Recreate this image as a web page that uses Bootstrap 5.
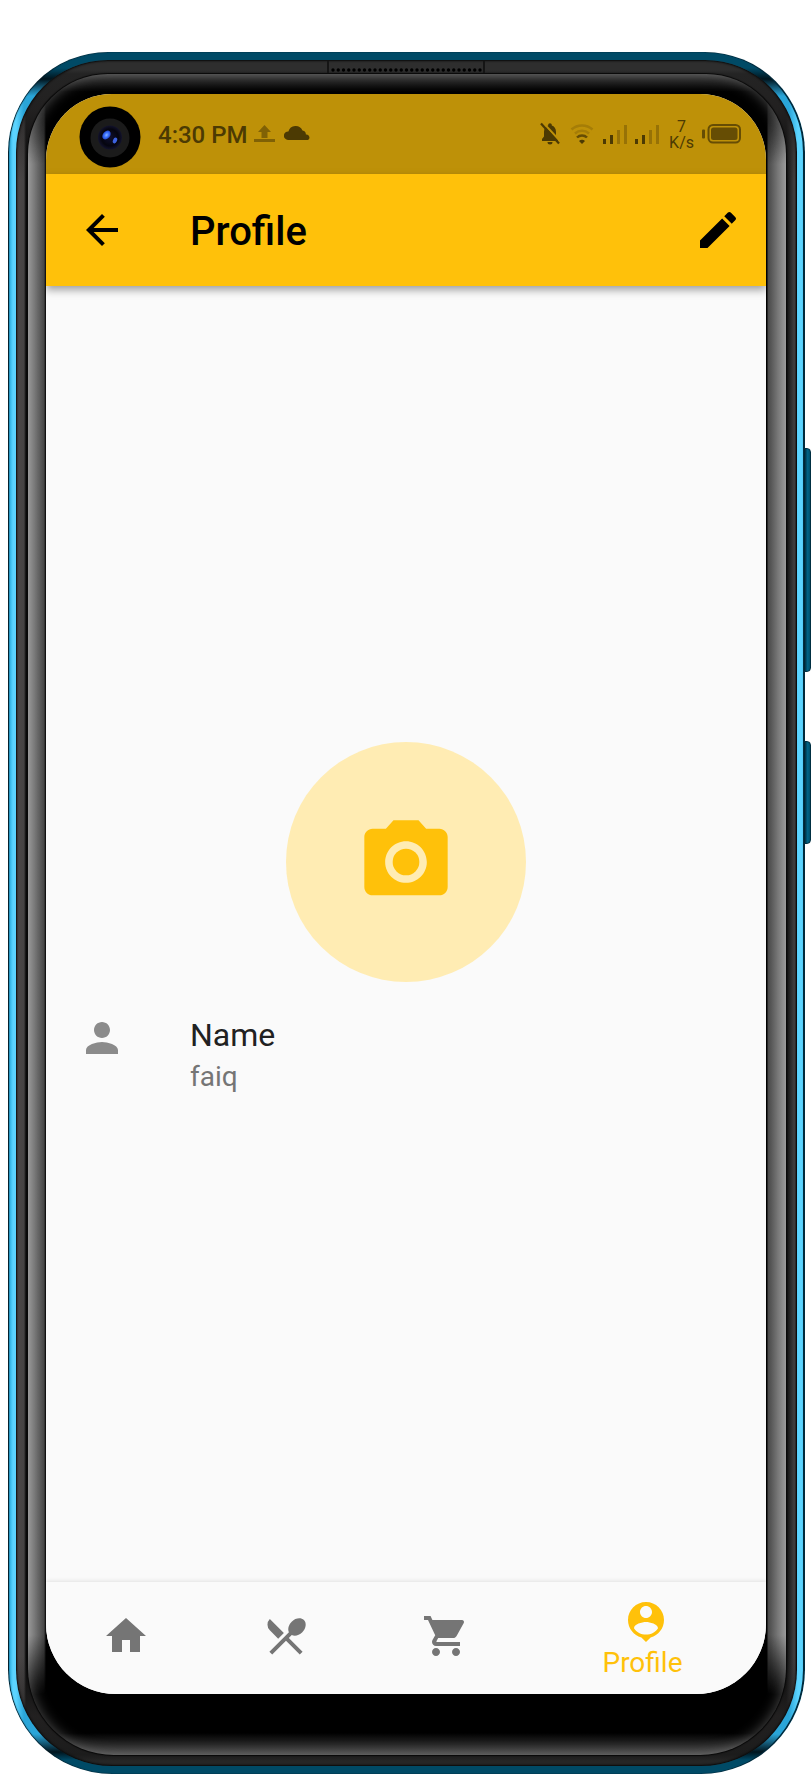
<!DOCTYPE html>
<html lang="en">
<head>
<meta charset="utf-8">
<meta name="viewport" content="width=device-width, initial-scale=1">
<title>Profile</title>
<link href="https://cdn.jsdelivr.net/npm/bootstrap@5.3.0/dist/css/bootstrap.min.css" rel="stylesheet">
<style>
  :root { --amber: #ffc10a; --ink: #4c3a03; --paper: #fafafa; }
  body { font-family: Roboto, "Liberation Sans", sans-serif; background: #fff; padding: 52px 7px 14px 8px; }
  svg { display: block; flex: none; }

  /* Phone body, from the metal rim inwards */
  .rim {
    padding: 8px;
    border-radius: 100px 100px 104px 104px;
    background:
      linear-gradient(to bottom, #004a66 0, #004a66 16px, #00141d 27px, transparent 44px,
        transparent calc(100% - 40px), #00141d calc(100% - 22px), #004a66 calc(100% - 14px), #004a66 100%),
      linear-gradient(to right, #1f90bd 0, #3fc0f0 3px, #5cd4ff 5px, #5cd4ff 8px, #2aa5d8 16px, #2aa5d8 30px, #123 50%,
        #2aa5d8 calc(100% - 30px), #2aa5d8 calc(100% - 16px), #5cd4ff calc(100% - 7px), #5cd4ff calc(100% - 3px), #2fa8d8 100%);
    box-shadow: inset 1px 0 1px #001822, inset -2px 0 0 #002a3c, inset 0 0 1px #001822;
  }
  .gasket {
    padding: 14px 11px 11px 12px;
    border-radius: 92px 92px 96px 96px;
    background:
      linear-gradient(to bottom, #2e2e2e 0, #2e2e2e 10px, #242424 14px, rgba(40,38,38,.8) 50px, transparent 120px,
        transparent calc(100% - 110px), rgba(40,38,38,.8) calc(100% - 50px), #1c1c1c calc(100% - 11px), #262626 calc(100% - 5px), #262626 100%),
      linear-gradient(to right, #4d4848 0, #454343 8px, #0a0a0a 10px, #0a0a0a 12px,
        #0a0a0a calc(100% - 11px), #202020 calc(100% - 8px), #464343 calc(100% - 2px), #111 100%);
    box-shadow: inset 0 0 2px 1px #080808;
  }
  .glass {
    padding: 20px 20px 61px 18px;
    border-radius: 80px 80px 86px 86px;
    background:
      linear-gradient(to bottom, #3a3a3a 0, #222 6px, #000 18px, rgba(0,0,0,.8) 30px, transparent 90px,
        transparent calc(100% - 120px), #000 calc(100% - 60px), #000 calc(100% - 22px), #4a4a4a 100%),
      linear-gradient(to right, #969696 0, #484848 16px, #000 18px, #000 calc(100% - 19px), #4a4a4a calc(100% - 18px), #999 100%);
    box-shadow: 0 0 1px 1px #080808, inset 0 0 14px rgba(160,160,160,.5);
  }
  .display-area { border-radius: 66px 66px 70px 70px; background: var(--paper); }

  .earpiece { top: 9px; left: 50%; margin-left: -80px; }
  .side-key { left: calc(100% - 2px); width: 8px; border-radius: 0 4px 4px 0; border: 1px solid #002f42; background: linear-gradient(to right, #001c28, #006488 60%, #00506c); }
  .key-volume { top: 23%; height: 13%; }
  .key-power { top: 40%; height: 6%; }

  .status-bar { height: 80px; padding: 0 25px 0 112px; background: #be9108; color: var(--ink); }
  .clock { font-size: 24px; line-height: 28px; font-weight: 500; padding-top: 2px; }
  .net-speed { font-size: 16px; line-height: 16px; padding: 2px 0 0 2px; }
  .lens { top: 12px; left: 33px; }

  .app-bar { height: 112px; padding: 0 24px 0 32px; background: var(--amber); color: #000; box-shadow: 0 4px 8px rgba(0,0,0,.36); }
  .app-title { font-size: 40px; line-height: 48px; font-weight: 500; margin-left: 64px; padding-top: 3px; }
  .icon-btn { padding: 0; border: 0; background: none; color: inherit; }

  .avatar { width: 240px; height: 240px; border: 0; background: #ffecb3; color: var(--amber); }
  .info-row { height: 144px; padding: 32px; gap: 64px; color: #8b8b8b; }
  .info-label { font-size: 32px; line-height: 42px; font-weight: 400; color: #212121; margin-bottom: 5px; }
  .info-value { font-size: 28px; line-height: 32px; color: #757575; }

  .tab-bar { height: 112px; background: var(--paper); box-shadow: 0 -1px 4px rgba(0,0,0,.1); }
  .tab { flex: 2 1 0; padding-bottom: 4px; color: #757575; text-decoration: none; }
  .tab.selected { flex-grow: 3; padding: 2px 0 0; color: var(--amber); font-size: 28px; line-height: 34px; }
  .tab-label { padding-right: 7px; }
</style>
</head>
<body class="d-flex flex-column min-vh-100">
<div class="rim position-relative flex-grow-1 d-flex flex-column">
  <div class="side-key key-volume position-absolute"></div>
  <div class="side-key key-power position-absolute"></div>
  <div class="gasket flex-grow-1 d-flex flex-column">
    <svg class="earpiece position-absolute" width="158" height="13" viewBox="0 0 158 13" aria-hidden="true">
      <path d="M1 0V12M157 0V12" stroke="#151515" stroke-width="2"/>
      <path d="M6 9H154" stroke="#000" stroke-width="3.4" stroke-linecap="round" stroke-dasharray="0 5.25"/>
    </svg>
    <div class="glass flex-grow-1 d-flex flex-column">
      <div class="display-area position-relative overflow-hidden flex-grow-1 d-flex flex-column">

        <div class="status-bar d-flex align-items-center">
          <svg class="lens position-absolute" width="62" height="62" viewBox="0 0 62 62" aria-hidden="true">
            <defs>
              <radialGradient id="lensGlow"><stop offset="0" stop-color="#101030"/><stop offset=".7" stop-color="#05050f"/><stop offset="1" stop-color="#12122c"/></radialGradient>
              <radialGradient id="lensBlue"><stop offset="0" stop-color="#8ab4ff"/><stop offset=".5" stop-color="#3d74ff"/><stop offset="1" stop-color="#2346c8"/></radialGradient>
            </defs>
            <circle cx="31" cy="31" r="30.5" fill="#000"/>
            <circle cx="31" cy="32" r="19.5" fill="#1b1b1b"/>
            <circle cx="31" cy="31.500" r="12" fill="url(#lensGlow)"/>
            <ellipse cx="27.500" cy="29" rx="3.600" ry="5" transform="rotate(40 27.500 29)" fill="url(#lensBlue)"/>
            <ellipse cx="36" cy="34.500" rx="2" ry="3" transform="rotate(25 36 34.500)" fill="#3d62e0"/>
          </svg>
          <span class="clock">4:30 PM</span>
          <svg class="ms-1" width="24" height="20" viewBox="0 0 24 20" fill="#806105" aria-hidden="true"><path d="M12.500 1l6.500 7h-3.500v6h-6V8H6zM2 15h21v3H2z"/></svg>
          <svg class="ms-2" width="26" height="20" viewBox="0 0 26 20" fill="currentColor" aria-hidden="true"><path d="M4 16a4.300 4.300 0 0 1 .4-8.600A7.500 7.500 0 0 1 18.500 6.500a4 4 0 0 1 3.400 4A3 3 0 0 1 24 16z"/></svg>

          <div class="ms-auto d-flex align-items-center">
            <svg width="22" height="24" viewBox="0 0 22 24" aria-hidden="true">
              <path fill="currentColor" d="M3 19v-2l2-2.500V10c0-3.600 1.700-5.800 4.200-6.500V3c0-1 .8-1.800 1.800-1.800s1.800.8 1.800 1.800v.5C15.300 4.200 17 6.400 17 10v4.500l2 2.500v2zM8.500 20h5a2.500 2.500 0 0 1-5 0z"/>
              <path d="M4 .5L21 19" stroke="#be9108" stroke-width="2"/><path d="M2 1.500L20 21.500" stroke="currentColor" stroke-width="2.200"/>
            </svg>
            <svg class="ms-2" width="26" height="24" viewBox="0 0 26 24" fill="none" stroke-width="2.500" aria-hidden="true">
              <path d="M2.500 7.500a16 16 0 0 1 21 0" stroke="#a57d07"/><path d="M6 11.500a10.500 10.500 0 0 1 14 0" stroke="#a57d07"/>
              <path d="M8 15.500a7 7 0 0 1 10 0" stroke="#664d04"/><path d="M13 22l-3-3a4.200 4.200 0 0 1 6 0z" fill="#4c3a03"/>
            </svg>
            <svg class="ms-2" width="24" height="24" viewBox="0 0 24 24" aria-hidden="true">
              <path fill="#4c3a03" d="M0 17h3v5H0zM7 13h3v9H7z"/><path fill="#977206" d="M14 8h3v14h-3zM21 3h3v19h-3z"/>
            </svg>
            <svg class="ms-2" width="24" height="24" viewBox="0 0 24 24" aria-hidden="true">
              <path fill="#4c3a03" d="M0 17h3v5H0zM7 13h3v9H7z"/><path fill="#977206" d="M14 8h3v14h-3zM21 3h3v19h-3z"/>
            </svg>
            <div class="net-speed text-center ms-2">7<br>K/s</div>
            <svg class="ms-2" width="39" height="20" viewBox="0 0 39 20" aria-hidden="true">
              <rect x="0" y="5.500" width="3" height="9" rx="1" fill="#664d04"/>
              <rect x="6.500" y="1" width="31.500" height="17.500" rx="4.500" fill="none" stroke="#664d04" stroke-width="2"/>
              <rect x="9" y="3.500" width="26.500" height="12.500" rx="2.500" fill="#664d04"/>
            </svg>
          </div>
        </div>

        <header class="app-bar d-flex align-items-center">
          <button type="button" class="icon-btn" aria-label="Back">
            <svg width="48" height="48" viewBox="0 0 24 24" fill="currentColor"><path d="M20 11H7.830l5.590-5.590L12 4l-8 8 8 8 1.410-1.410L7.830 13H20v-2z"/></svg>
          </button>
          <h1 class="app-title mb-0 me-auto">Profile</h1>
          <button type="button" class="icon-btn" aria-label="Edit">
            <svg width="48" height="48" viewBox="0 0 24 24" fill="currentColor"><path d="M3 17.250V21h3.750L17.810 9.940l-3.750-3.750L3 17.250zM20.710 7.040a1 1 0 0 0 0-1.410l-2.340-2.340a1 1 0 0 0-1.410 0l-1.830 1.830 3.750 3.750 1.830-1.830z"/></svg>
          </button>
        </header>

        <main class="flex-grow-1 d-flex flex-column justify-content-center">
          <button type="button" class="avatar rounded-circle align-self-center d-flex align-items-center justify-content-center" aria-label="Change photo">
            <svg width="100" height="100" viewBox="0 0 24 24" fill="currentColor"><circle cx="12" cy="12" r="3.200"/><path d="M9 2L7.170 4H4c-1.100 0-2 .9-2 2v12c0 1.100.9 2 2 2h16c1.100 0 2-.9 2-2V6c0-1.100-.9-2-2-2h-3.170L15 2H9zm3 15c-2.760 0-5-2.240-5-5s2.240-5 5-5 5 2.240 5 5-2.240 5-5 5z"/></svg>
          </button>
          <div class="info-row d-flex">
            <svg width="48" height="48" viewBox="0 0 24 24" fill="currentColor" aria-hidden="true"><path d="M12 12c2.210 0 4-1.790 4-4s-1.790-4-4-4-4 1.790-4 4 1.790 4 4 4zm0 2c-2.670 0-8 1.340-8 4v2h16v-2c0-2.660-5.330-4-8-4z"/></svg>
            <dl class="mb-0">
              <dt class="info-label">Name</dt>
              <dd class="info-value mb-0">faiq</dd>
            </dl>
          </div>
        </main>

        <nav class="tab-bar d-flex" aria-label="Main">
          <a class="tab d-flex flex-column align-items-center justify-content-center" href="#home" aria-label="Home">
            <svg width="48" height="48" viewBox="0 0 24 24" fill="currentColor"><path d="M10 20v-6h4v6h5v-8h3L12 3 2 12h3v8z"/></svg>
          </a>
          <a class="tab d-flex flex-column align-items-center justify-content-center" href="#menu" aria-label="Menu">
            <svg width="48" height="48" viewBox="0 0 24 24" fill="currentColor"><path d="M8.100 13.340l2.830-2.830L3.910 3.500a4.008 4.008 0 0 0 0 5.660l4.190 4.180zm6.780-1.810c1.530.71 3.680.21 5.270-1.380 1.910-1.910 2.280-4.650.81-6.120-1.460-1.460-4.200-1.100-6.120.81-1.590 1.590-2.090 3.740-1.380 5.270L3.700 19.870l1.410 1.410L12 14.410l6.880 6.880 1.410-1.410L13.410 13l1.470-1.470z"/></svg>
          </a>
          <a class="tab d-flex flex-column align-items-center justify-content-center" href="#cart" aria-label="Cart">
            <svg width="48" height="48" viewBox="0 0 24 24" fill="currentColor"><path d="M7 18c-1.100 0-1.990.9-1.990 2S5.900 22 7 22s2-.9 2-2-.9-2-2-2zM1 2v2h2l3.600 7.590-1.350 2.450c-.16.28-.25.61-.25.96 0 1.100.9 2 2 2h12v-2H7.420c-.14 0-.25-.11-.25-.25l.03-.12.9-1.630h7.450c.75 0 1.410-.41 1.750-1.030l3.580-6.490A1.003 1.003 0 0 0 20 4H5.210l-.94-2H1zm16 16c-1.100 0-1.990.9-1.990 2s.89 2 1.990 2 2-.9 2-2-.9-2-2-2z"/></svg>
          </a>
          <a class="tab selected d-flex flex-column align-items-center justify-content-center" href="#profile" aria-current="page">
            <svg width="48" height="48" viewBox="0 0 24 24" fill="currentColor" aria-hidden="true"><path d="M12 2c-4.970 0-9 4.030-9 9 0 4.170 2.840 7.670 6.690 8.690L12 22l2.310-2.310C18.160 18.670 21 15.170 21 11c0-4.970-4.030-9-9-9zm0 2c1.660 0 3 1.340 3 3s-1.340 3-3 3-3-1.340-3-3 1.340-3 3-3zm0 14.300c-2.500 0-4.710-1.280-6-3.220.03-1.990 4-3.080 6-3.080 1.990 0 5.970 1.090 6 3.080-1.290 1.940-3.500 3.220-6 3.220z"/></svg>
            <span class="tab-label">Profile</span>
          </a>
        </nav>

      </div>
    </div>
  </div>
</div>
<script src="https://cdn.jsdelivr.net/npm/bootstrap@5.3.0/dist/js/bootstrap.bundle.min.js"></script>
</body>
</html>
